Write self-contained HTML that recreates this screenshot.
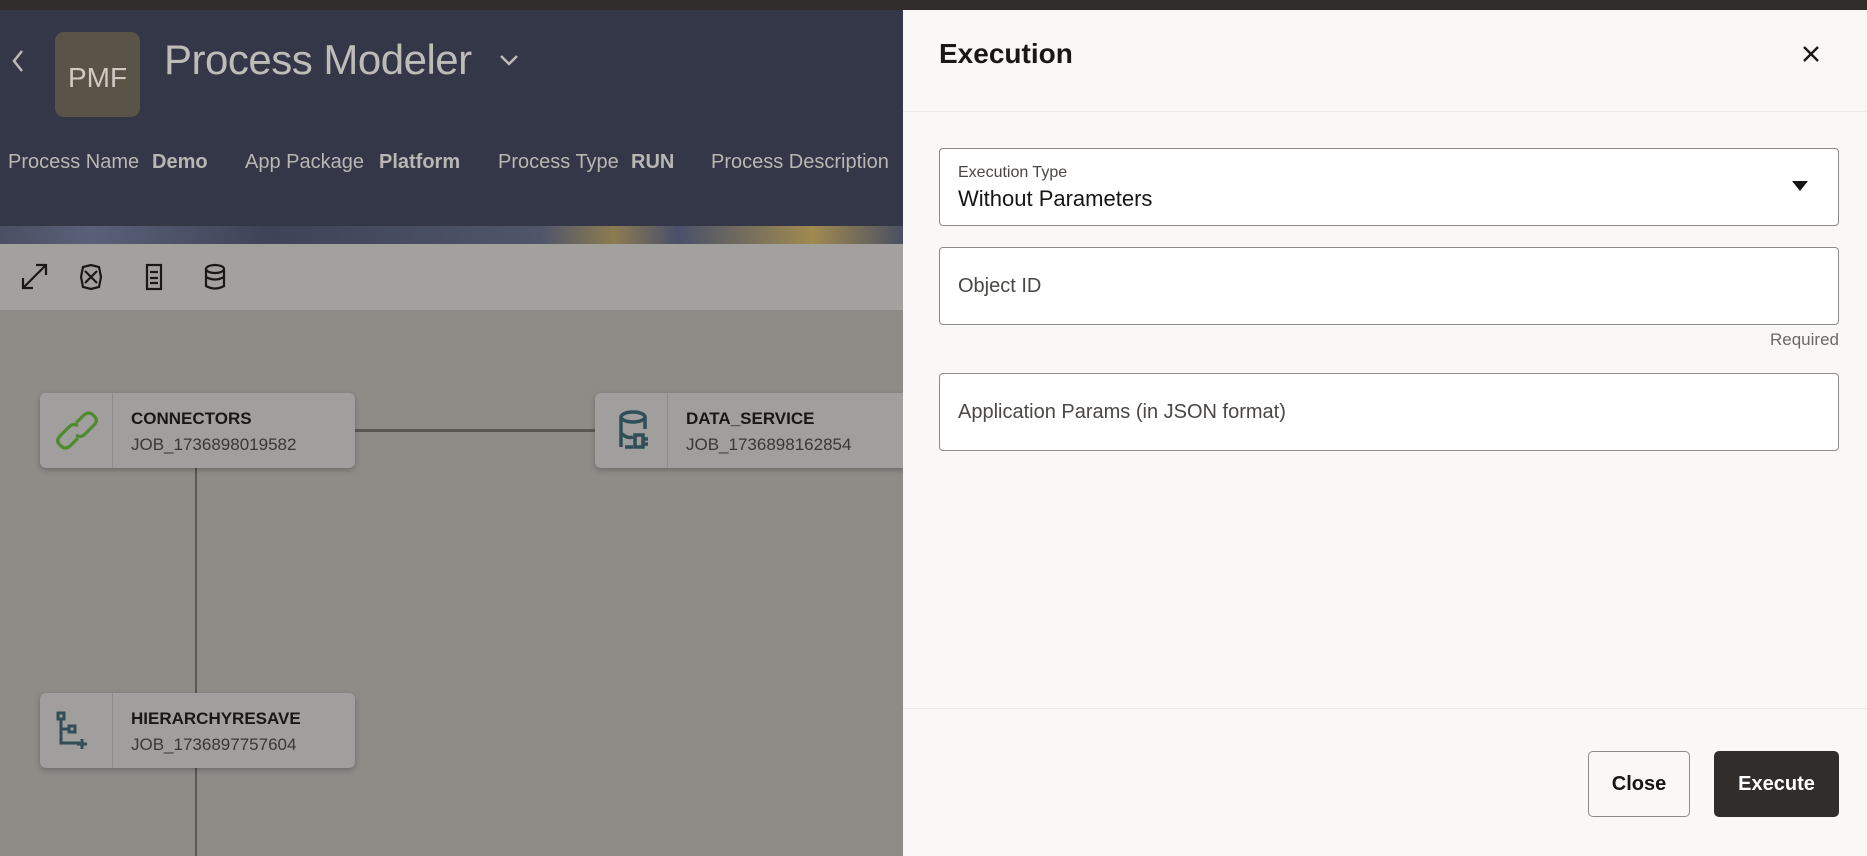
<!DOCTYPE html>
<html><head><meta charset="utf-8"><style>
*{margin:0;padding:0;box-sizing:border-box}
body{width:1867px;height:856px;overflow:hidden;position:relative;font-family:"Liberation Sans",sans-serif;background:#8f8c88}
.abs{position:absolute}
.top{left:0;top:0;width:1867px;height:10px;background:#312d2a}
.hdr{left:0;top:10px;width:903px;height:216px;background:#343747}
.band{left:0;top:226px;width:903px;height:18px;background:linear-gradient(90deg,#4a4f63 0,#5a6078 10%,#3e4357 30%,#50566a 60%,#8d7b50 68%,#49506a 75%,#a08a50 90%,#4a4f63 100%)}
.tb{left:0;top:244px;width:903px;height:66px;background:#a3a19e}
.meta{top:151px;font-size:20px;color:#b9b7b3;white-space:nowrap}
.meta b{color:#b9b7b3}
.card{width:315px;height:75px;background:#a09f9d;border-radius:6px;box-shadow:0 2px 6px rgba(0,0,0,.25)}
.card .ic{position:absolute;left:0;top:0;width:73px;height:75px;border-right:1px solid #8e8d8b}
.card .t{position:absolute;left:91px;top:16px;font-size:17px;font-weight:bold;color:#1a1816}
.card .s{position:absolute;left:91px;top:42px;font-size:17px;color:#3a3836}
.panel{left:903px;top:10px;width:964px;height:846px;background:#f9f8f6}
.box{left:939px;width:900px;background:#fff;border:1px solid #8d8a87;border-radius:4px}
.lbl{font-size:20px;color:#4a4744}
</style></head><body>
<div class="abs top"></div>
<div class="abs hdr"></div>
<div class="abs band"></div>
<div class="abs tb"></div>
<svg class="abs" style="left:8px;top:48px" width="18" height="26"><path d="M14 3 L6 13 L14 23" stroke="#bdbab6" stroke-width="2.5" fill="none"/></svg>
<div class="abs" style="left:55px;top:32px;width:85px;height:85px;border-radius:9px;background:#5a5347"></div>
<div class="abs" style="left:55px;top:62px;width:85px;text-align:center;font-size:28px;color:#cfcac2">PMF</div>
<div class="abs" style="left:164px;top:36px;font-size:42px;letter-spacing:-0.5px;color:#bebcb9">Process Modeler</div>
<svg class="abs" style="left:498px;top:52px" width="22" height="16"><path d="M3 4 L11 12 L19 4" stroke="#bebcb9" stroke-width="2.5" fill="none"/></svg>
<div class="abs meta" style="left:8px">Process Name</div><div class="abs meta" style="left:152px"><b>Demo</b></div>
<div class="abs meta" style="left:245px">App Package</div><div class="abs meta" style="left:379px"><b>Platform</b></div>
<div class="abs meta" style="left:498px">Process Type</div><div class="abs meta" style="left:631px"><b>RUN</b></div>
<div class="abs meta" style="left:711px">Process Description</div>
<svg class="abs" style="left:20px;top:262px" width="240" height="30" fill="none" stroke="#1a1816" stroke-width="2.2">
<path d="M3 26 L26 3 M16 3 H26 V13 M3 16 V26 H13"/>
<path d="M63 5 L71 3 L79 5 L81 15 L79 25 L71 27 L63 25 L61 15 Z M65 9 L77 21 M77 9 L65 21"/>
<rect x="127" y="3" width="14" height="24"/><path d="M130 10 H138 M130 16 H138 M130 21 H138"/>
<ellipse cx="195" cy="7" rx="9" ry="4"/><path d="M186 7 V24 Q195 29 204 24 V7 M186 15 Q195 20 204 15"/>
</svg>
<div class="abs" style="left:354px;top:429px;width:241px;height:3px;background:#5b5752"></div>
<div class="abs" style="left:195px;top:467px;width:2px;height:226px;background:#5b5752"></div>
<div class="abs" style="left:195px;top:767px;width:2px;height:89px;background:#5b5752"></div>
<div class="abs card" style="left:40px;top:393px"><div class="ic"><svg width="73" height="75" fill="none" stroke="#4e8a2e" stroke-width="3.2"><path d="M36 30 L44 22 Q49 18 53 22 L55 24 Q58 28 54 32 L44 42 Q40 45 36 42"/><path d="M38 45 L30 53 Q25 57 21 53 L19 51 Q16 47 20 43 L30 33 Q34 30 38 33"/></svg></div><div class="t">CONNECTORS</div><div class="s">JOB_1736898019582</div></div>
<div class="abs card" style="left:595px;top:393px;width:320px"><div class="ic"><svg width="73" height="75" fill="none" stroke="#2f4e58" stroke-width="3.5"><ellipse cx="38" cy="24" rx="12" ry="5"/><path d="M26 24 V54 M26 40 Q32 46 38 44 M50 24 V36 M38 54 H30 M40 42 H48 V54 H40 Z M48 46 H53 M48 51 H53"/></svg></div><div class="t">DATA_SERVICE</div><div class="s">JOB_1736898162854</div></div>
<div class="abs card" style="left:40px;top:693px"><div class="ic"><svg width="73" height="75" fill="none" stroke="#2f4e58" stroke-width="3"><rect x="18" y="20" width="6" height="6"/><path d="M21 26 V50 H40 M21 36 H29"/><rect x="29" y="33" width="6" height="6"/><path d="M42 46 V56 M37 51 H47"/></svg></div><div class="t">HIERARCHYRESAVE</div><div class="s">JOB_1736897757604</div></div>

<div class="abs panel"></div>
<div class="abs" style="left:939px;top:38px;font-size:28px;font-weight:bold;color:#1a1816">Execution</div>
<svg class="abs" style="left:1801px;top:44px" width="20" height="20"><path d="M3 3 L17 17 M17 3 L3 17" stroke="#1a1816" stroke-width="2.4"/></svg>
<div class="abs" style="left:903px;top:111px;width:964px;height:1px;background:#ebe9e6"></div>
<div class="abs box" style="top:148px;height:78px"></div>
<div class="abs" style="left:958px;top:164px;font-size:16px;color:#4a4744">Execution Type</div>
<div class="abs" style="left:958px;top:186px;font-size:22px;color:#161513">Without Parameters</div>
<svg class="abs" style="left:1791px;top:180px" width="18" height="12"><path d="M1 1 H17 L9 11 Z" fill="#161513"/></svg>
<div class="abs box" style="top:247px;height:78px"></div>
<div class="abs lbl" style="left:958px;top:275px">Object ID</div>
<div class="abs" style="left:1739px;top:330px;width:100px;text-align:right;font-size:17px;color:#6b6865">Required</div>
<div class="abs box" style="top:373px;height:78px"></div>
<div class="abs lbl" style="left:958px;top:401px">Application Params (in JSON format)</div>
<div class="abs" style="left:903px;top:708px;width:964px;height:1px;background:#ebe9e6"></div>
<div class="abs" style="left:1588px;top:751px;width:102px;height:66px;border:1px solid #8d8a87;border-radius:5px;background:#f9f8f6;text-align:center;line-height:64px;font-size:20px;font-weight:bold;color:#161513">Close</div>
<div class="abs" style="left:1714px;top:751px;width:125px;height:66px;border-radius:5px;background:#312d2a;text-align:center;line-height:66px;font-size:20px;font-weight:bold;color:#fff">Execute</div>
</body></html>
